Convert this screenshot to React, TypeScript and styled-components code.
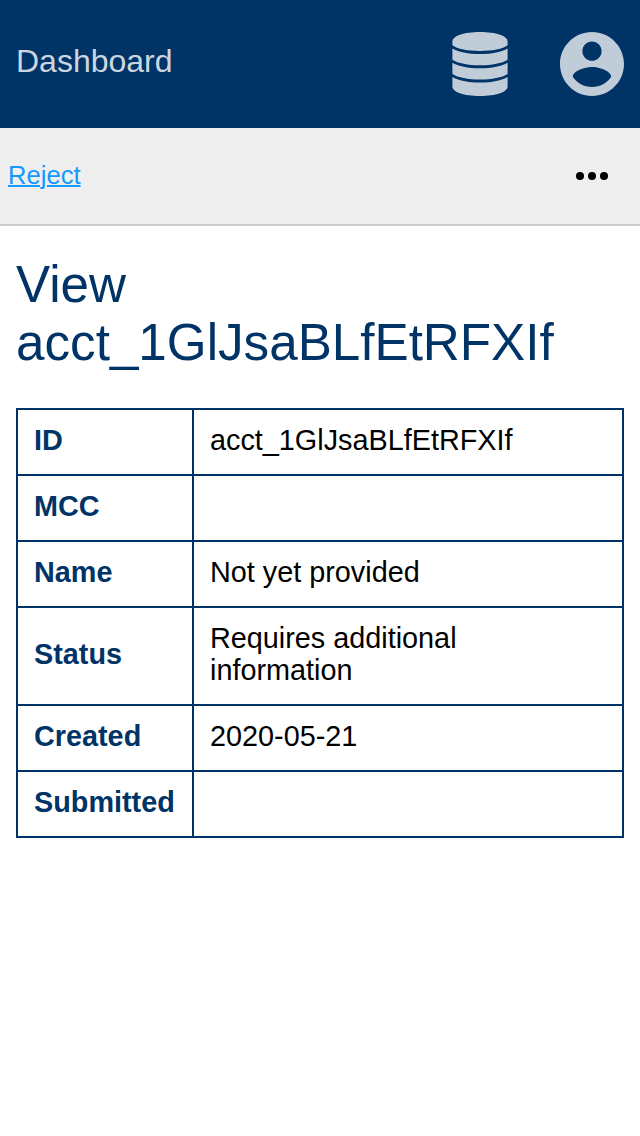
import React from 'react';
import styled, { createGlobalStyle } from 'styled-components';

const GlobalStyle = createGlobalStyle`
  body {
    margin: 0;
    background: #fff;
    color: #000;
    font-family: "Liberation Sans", Arial, sans-serif;
  }
`;

const Header = styled.header`
  display: flex;
  align-items: center;
  height: 128px;
  padding: 0 16px;
  box-sizing: border-box;
  background: #036;
  color: #c0cdd9;
`;

const Brand = styled.a`
  flex: 1;
  font-size: 32px;
  line-height: 36px;
  padding-bottom: 6px;
  color: #ccd6e0;
`;

const HeaderIcon = styled.svg<{ $width: number }>`
  display: block;
  width: ${({ $width }) => $width}px;
  height: 64px;
  fill: currentColor;
  margin-left: 52px;
`;

const Toolbar = styled.nav`
  display: flex;
  align-items: center;
  justify-content: space-between;
  height: 98px;
  padding: 0 32px 0 8px;
  box-sizing: border-box;
  background: #eee;
  border-bottom: 2px solid #ccc;
`;

const ToolbarLink = styled.a`
  padding-bottom: 2px;
  color: #1499ff;
  font-size: 25.6px;
  line-height: 30px;
  text-decoration: underline;
  text-decoration-thickness: 2px;
`;

const MoreIcon = styled.svg`
  display: block;
  width: 32px;
  height: 8px;
`;

const Main = styled.main`
  padding: 30px 16px 0;
`;

const Title = styled.h1`
  margin: 0 0 36px;
  color: #036;
  font-size: 51.2px;
  font-weight: 400;
  line-height: 58px;
`;

const Table = styled.table`
  width: 608px;
  border-collapse: collapse;
  table-layout: fixed;
  font-size: 28.8px;
  line-height: 32px;
`;

const Label = styled.th`
  width: 142px;
  height: 32px;
  padding: 14px 16px 18px;
  border: 2px solid #036;
  color: #036;
  text-align: left;
  vertical-align: middle;
`;

const Value = styled.td`
  padding: 14px 16px 18px;
  border: 2px solid #036;
`;

const rows = [
  ['ID', 'acct_1GlJsaBLfEtRFXIf'],
  ['MCC', ''],
  ['Name', 'Not yet provided'],
  ['Status', 'Requires additional information'],
  ['Created', '2020-05-21'],
  ['Submitted', ''],
];

export default function App() {
  return (
    <>
      <GlobalStyle />
      <Header>
        <Brand>Dashboard</Brand>
        <HeaderIcon $width={56} viewBox="0 0 56 64">
          <path d="M.4 9.500C.4 4 12 0 28 0s27.600 4 27.600 9.500v3.700C51 17 40 18.900 28 18.900S5 17 .4 13.200z" />
          <path d="M.4 16.500C6 20 16 22 28 22s22-2 27.600-5.500v11.200C50 31.300 40 33.200 28 33.200S6 31.300.4 27.700z" />
          <path d="M.4 30.700C6 34.200 16 36.200 28 36.200s22-2 27.600-5.500v11.400C50 45.700 40 47.600 28 47.600S6 45.700.4 42.100z" />
          <path d="M.4 45.100C6 48.600 16 50.600 28 50.600s22-2 27.600-5.500v9.400C55.600 60 44 64 28 64S.4 60 .4 54.500z" />
        </HeaderIcon>
        <HeaderIcon $width={64} viewBox="2 2 20 20">
          <path d="M12 2C6.480 2 2 6.480 2 12s4.480 10 10 10 10-4.480 10-10S17.520 2 12 2zm0 3c1.660 0 3 1.340 3 3s-1.340 3-3 3-3-1.340-3-3 1.340-3 3-3zm0 14.200c-2.500 0-4.710-1.280-6-3.220.03-1.990 4-3.080 6-3.080 1.990 0 5.970 1.090 6 3.080-1.290 1.940-3.500 3.220-6 3.220z" />
        </HeaderIcon>
      </Header>
      <Toolbar>
        <ToolbarLink>Reject</ToolbarLink>
        <MoreIcon viewBox="0 0 32 8">
          <circle cx="4" cy="4" r="4" />
          <circle cx="16" cy="4" r="4" />
          <circle cx="28" cy="4" r="4" />
        </MoreIcon>
      </Toolbar>
      <Main>
        <Title>View acct_1GlJsaBLfEtRFXIf</Title>
        <Table>
          <tbody>
            {rows.map(([label, value]) => (
              <tr key={label}>
                <Label>{label}</Label>
                <Value>{value}</Value>
              </tr>
            ))}
          </tbody>
        </Table>
      </Main>
    </>
  );
}
